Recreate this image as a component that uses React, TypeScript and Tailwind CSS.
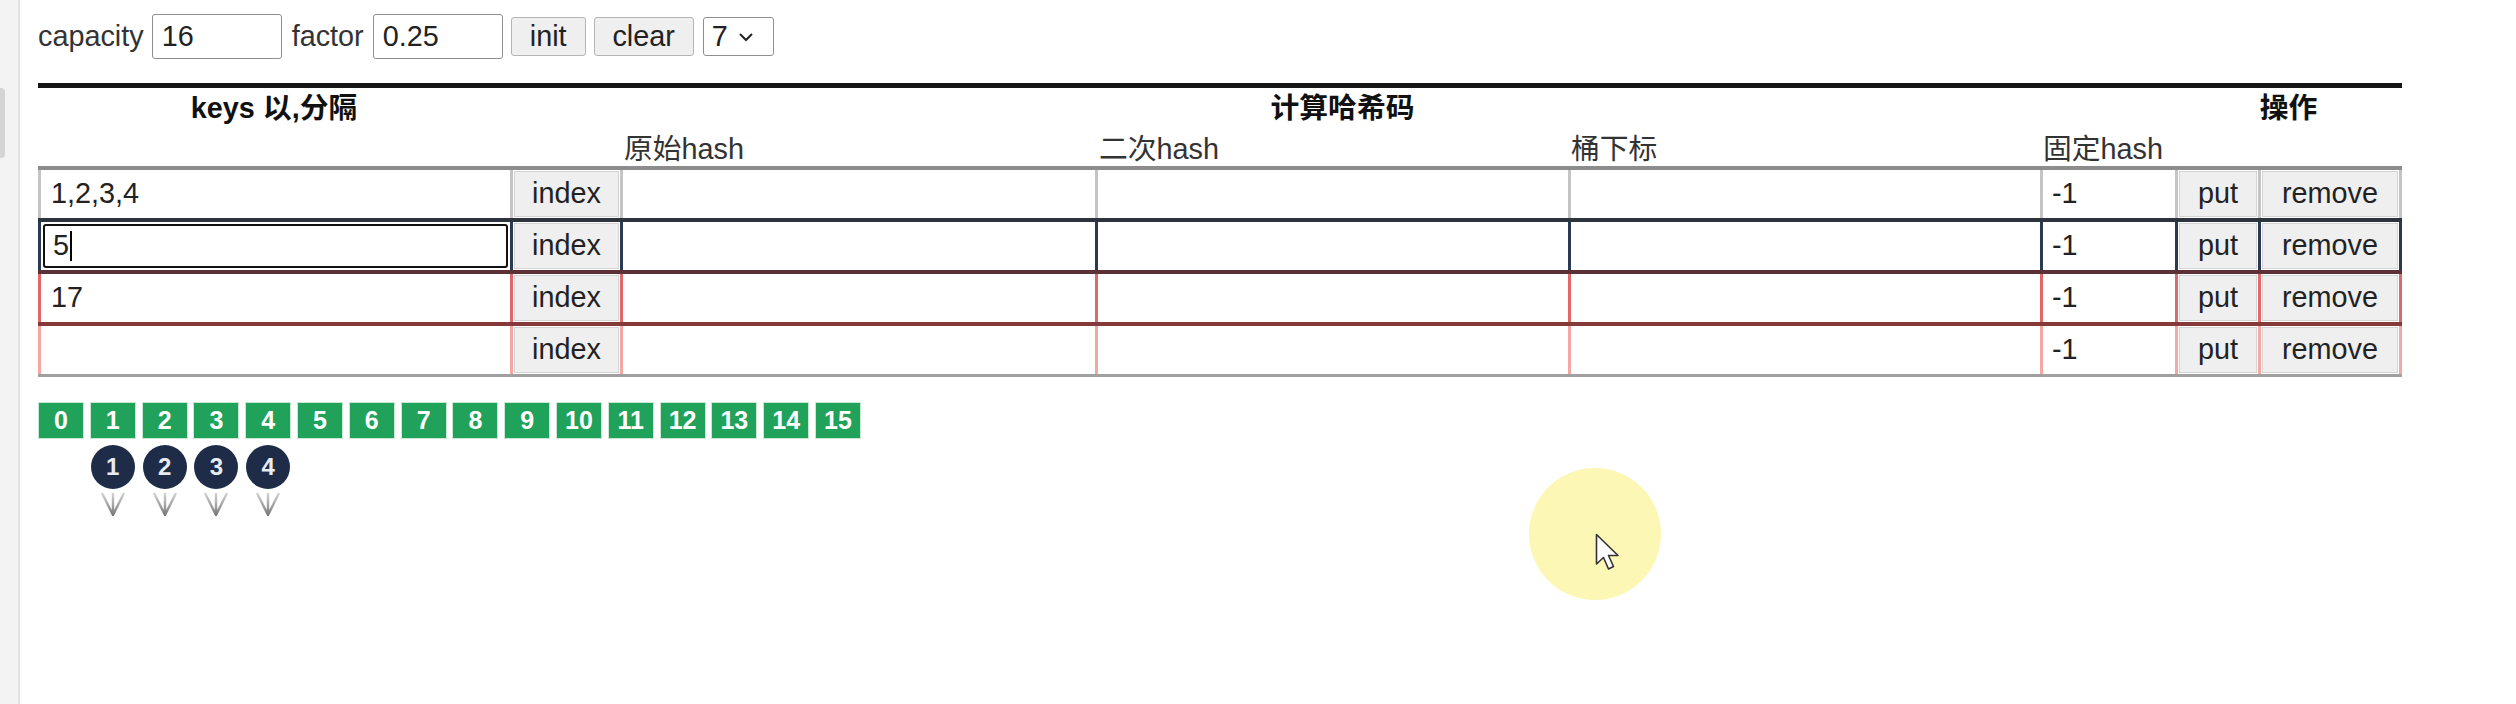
import React from "react";

type RowSpec = {
  keys: string;
  side: string;
  top: string;
  focused?: boolean;
};

const rows: RowSpec[] = [
  { keys: "1,2,3,4", side: "border-[#c4c4c4]", top: "border-t-[#8c8c8c]" },
  { keys: "5", side: "border-[#2a3a52]", top: "border-t-[#2e343e]", focused: true },
  { keys: "17", side: "border-[#e06868]", top: "border-t-[#5c3034]" },
  { keys: "", side: "border-[#f3a8a3]", top: "border-t-[#873838]" },
];

const buckets = Array.from({ length: 16 }, (_, i) => i);

function Btn({ label }: { label: string }) {
  return (
    <div className="m-[1px] flex h-[calc(100%-2px)] w-full items-center justify-center border border-[#d4d4d4] bg-[#efefef] text-[#222]">
      {label}
    </div>
  );
}

function Arrow() {
  return (
    <svg width="26" height="24" viewBox="0 0 26 24" className="mt-[3px]">
      <defs>
        <linearGradient id="ag" x1="0" y1="0" x2="0" y2="1">
          <stop offset="0" stopColor="#d4d4d4" />
          <stop offset="1" stopColor="#7a7a7a" />
        </linearGradient>
      </defs>
      <path d="M2 1 L13 23 L24 1 M13 1 L13 23" stroke="url(#ag)" strokeWidth="2.4" fill="none" />
    </svg>
  );
}

function HashRow({ r }: { r: RowSpec }) {
  return (
    <div className={`flex h-[52px] border-t-4 ${r.top}`}>
      <div className={`flex w-[472px] items-center border-l-[3px] bg-white ${r.side}`}>
        {r.focused ? (
          <div className="m-[2px] flex h-[calc(100%-4px)] w-full items-center rounded-[3px] border-2 border-[#111] px-[8px]">
            {r.keys}
            <span className="ml-[1px] inline-block h-[30px] w-[2px] bg-black" />
          </div>
        ) : (
          <div className="flex h-full w-full items-center px-[10px]">{r.keys}</div>
        )}
      </div>
      <div className={`flex w-[110px] items-center border-l-[3px] ${r.side}`}>
        <Btn label="index" />
      </div>
      <div className={`w-[475px] border-l-[3px] bg-white ${r.side}`} />
      <div className={`w-[473px] border-l-[3px] bg-white ${r.side}`} />
      <div className={`w-[472px] border-l-[3px] bg-white ${r.side}`} />
      <div className={`flex w-[135px] items-center border-l-[3px] bg-white px-[9px] ${r.side}`}>-1</div>
      <div className={`flex w-[83px] items-center border-l-[3px] ${r.side}`}>
        <Btn label="put" />
      </div>
      <div className={`flex w-[144px] items-center border-x-[3px] ${r.side}`}>
        <Btn label="remove" />
      </div>
    </div>
  );
}

export default function App() {
  return (
    <div className="relative flex h-[704px] w-[2516px] overflow-hidden bg-white font-['Liberation_Sans','Noto_Sans_CJK_SC',sans-serif] text-[28.8px] text-[#222]">
      {/* side strip */}
      <div className="h-full w-[20px] shrink-0 border-r-2 border-[#e2e2e2] bg-[#f3f3f3]">
        <div className="mt-[88px] h-[70px] w-[5px] rounded-r-[4px] bg-[#d4d4d4]" />
      </div>

      <div className="pl-[18px]">
        {/* controls */}
        <div className="mt-[14px] flex h-[45px] items-center leading-none">
          <span className="text-[#333]">capacity</span>
          <div className="ml-[8px] flex h-[45px] w-[130px] items-center rounded-[3px] border border-[#8f8f8f] px-[9px]">16</div>
          <span className="ml-[10px] text-[#333]">factor</span>
          <div className="ml-[9px] flex h-[45px] w-[130px] items-center rounded-[3px] border border-[#8f8f8f] px-[9px]">0.25</div>
          <div className="ml-[8px] flex h-[39px] w-[75px] items-center justify-center rounded-[3px] border border-[#b4b4b4] bg-[#efefef]">init</div>
          <div className="ml-[8px] flex h-[39px] w-[100px] items-center justify-center rounded-[3px] border border-[#b4b4b4] bg-[#efefef]">clear</div>
          <div className="ml-[9px] flex h-[39px] w-[71px] items-center gap-[10px] rounded-[3px] border border-[#8f8f8f] pl-[8px]">
            <span>7</span>
            <svg width="16" height="10" viewBox="0 0 16 10">
              <path d="M2 2 L8 8 L14 2" stroke="#222" strokeWidth="2" fill="none" />
            </svg>
          </div>
        </div>

        {/* table */}
        <div className="mt-[24px] w-[2364px] border-t-[5px] border-b-[3px] border-t-[#161616] border-b-[#a0a0a0]">
          <div className="flex h-[41px] items-center font-bold leading-none text-[#111]">
            <div className="w-[472px] text-center">keys 以,分隔</div>
            <div className="w-[1665px] text-center">计算哈希码</div>
            <div className="w-[227px] text-center">操作</div>
          </div>
          <div className="flex h-[37px] items-center leading-none text-[#333]">
            <div className="w-[472px]" />
            <div className="w-[110px]" />
            <div className="w-[475px] pl-[4px] pt-[3px]">原始hash</div>
            <div className="w-[473px] pl-[4px] pt-[3px]">二次hash</div>
            <div className="w-[472px] pl-[3px] pt-[3px]">桶下标</div>
            <div className="w-[135px] pl-[3px] pt-[3px]">固定hash</div>
          </div>
          {rows.map((r, i) => (
            <HashRow key={i} r={r} />
          ))}
        </div>

        {/* buckets */}
        <div className="mt-[25px] flex items-start gap-[5.8px]">
          {buckets.map((b) => (
            <div key={b} className="flex w-[46px] flex-col items-center">
              <div className="flex h-[37px] w-[46px] items-center justify-center border border-[#c8e8d2] bg-[#20a25a] text-[25px] font-bold leading-none text-white">
                {b}
              </div>
              {b >= 1 && b <= 4 && (
                <>
                  <div className="mt-[6px] flex h-[44px] w-[44px] items-center justify-center rounded-full bg-[#1e2c48] text-[24px] font-bold leading-none text-[#e8ecf2]">
                    {b}
                  </div>
                  <Arrow />
                </>
              )}
            </div>
          ))}
        </div>
      </div>

      {/* cursor highlight */}
      <div className="absolute left-[1529px] top-[468px] h-[132px] w-[132px] rounded-full bg-[#fcf7b4]" />
      <svg className="absolute left-[1595px] top-[533px]" width="28" height="42" viewBox="0 0 28 42">
        <path d="M1.5 1.5 L1.5 31 L8.5 24.5 L13.5 36 L18.5 33.5 L13.5 22.5 L23 22.5 Z" fill="#fff" stroke="#333" strokeWidth="1.6" strokeLinejoin="round" />
      </svg>
    </div>
  );
}
